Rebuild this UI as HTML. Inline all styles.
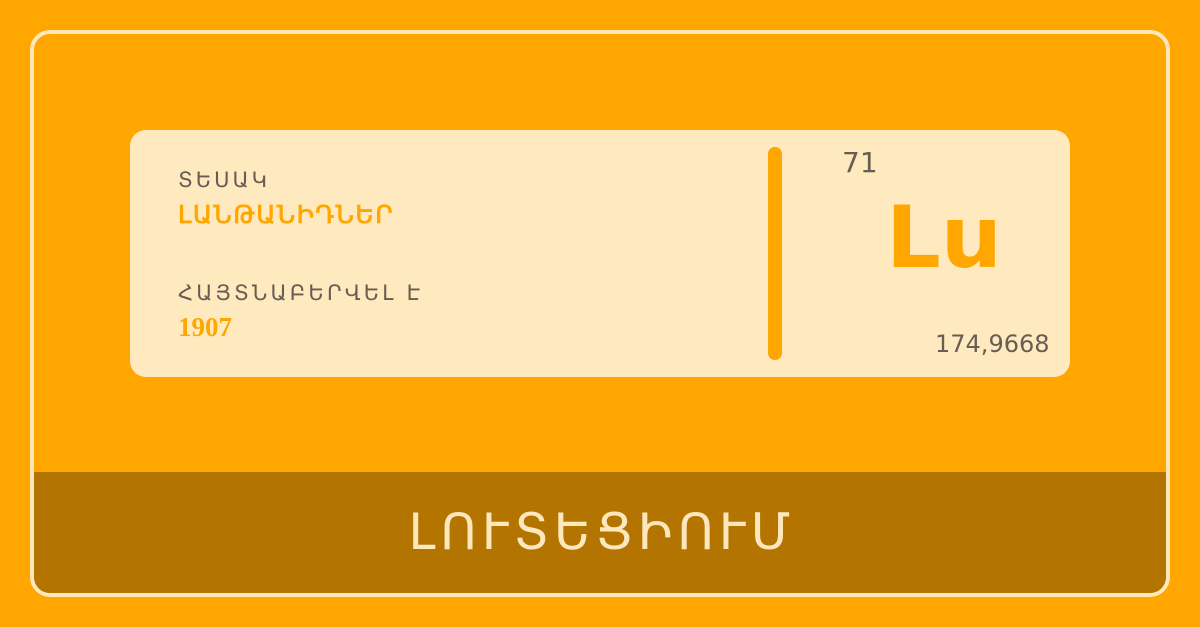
<!DOCTYPE html>
<html><head><meta charset="utf-8"><style>
body{margin:0;width:1200px;height:627px;background:#ffa700;position:relative;overflow:hidden;font-family:"DejaVu Sans","Liberation Sans",sans-serif}
.frame{position:absolute;left:30px;top:30px;width:1132px;height:559px;border:4px solid #ffe7bd;border-radius:20px;overflow:hidden}
.band{position:absolute;left:0;right:0;top:438px;bottom:0;background:#b37500;color:#ffe7bd;font-size:50px;text-align:center;line-height:120px;letter-spacing:5px;padding-left:4px}
.card{position:absolute;left:130px;top:130px;width:940px;height:247px;background:#ffe9bf;border-radius:16px}
.t{position:absolute;color:#675d53;font-size:21px;letter-spacing:3px}
.o{position:absolute;color:#ffa700;font-size:25px;font-weight:bold}
.bar{position:absolute;left:638px;top:17px;width:14px;height:213px;background:#ffa700;border-radius:7px}
</style></head><body>
<div class="frame"><div class="band">ԼՈՒՏԵՑԻՈՒՄ</div></div>
<div class="card">
<div class="t" style="left:48px;top:38px">ՏԵՍԱԿ</div>
<div class="o" style="left:48px;top:70px;font-weight:normal;-webkit-text-stroke:0.8px #ffa700;letter-spacing:1.5px">ԼԱՆԹԱՆԻԴՆԵՐ</div>
<div class="t" style="left:48px;top:151px;letter-spacing:3.2px">ՀԱՅՏՆԱԲԵՐՎԵԼ Է</div>
<div class="o" style="left:48px;top:182px;font-family:'Liberation Serif',serif;font-size:27px">1907</div>
<div class="bar"></div>
<div class="t" style="left:712px;top:16px;font-size:28px;letter-spacing:0">71</div>
<div class="o" style="left:756px;top:58px;font-size:86px;font-family:'DejaVu Sans',sans-serif">Lu</div>
<div class="t" style="left:805px;top:200px;font-size:24px;letter-spacing:0">174,9668</div>
</div>
</body></html>
